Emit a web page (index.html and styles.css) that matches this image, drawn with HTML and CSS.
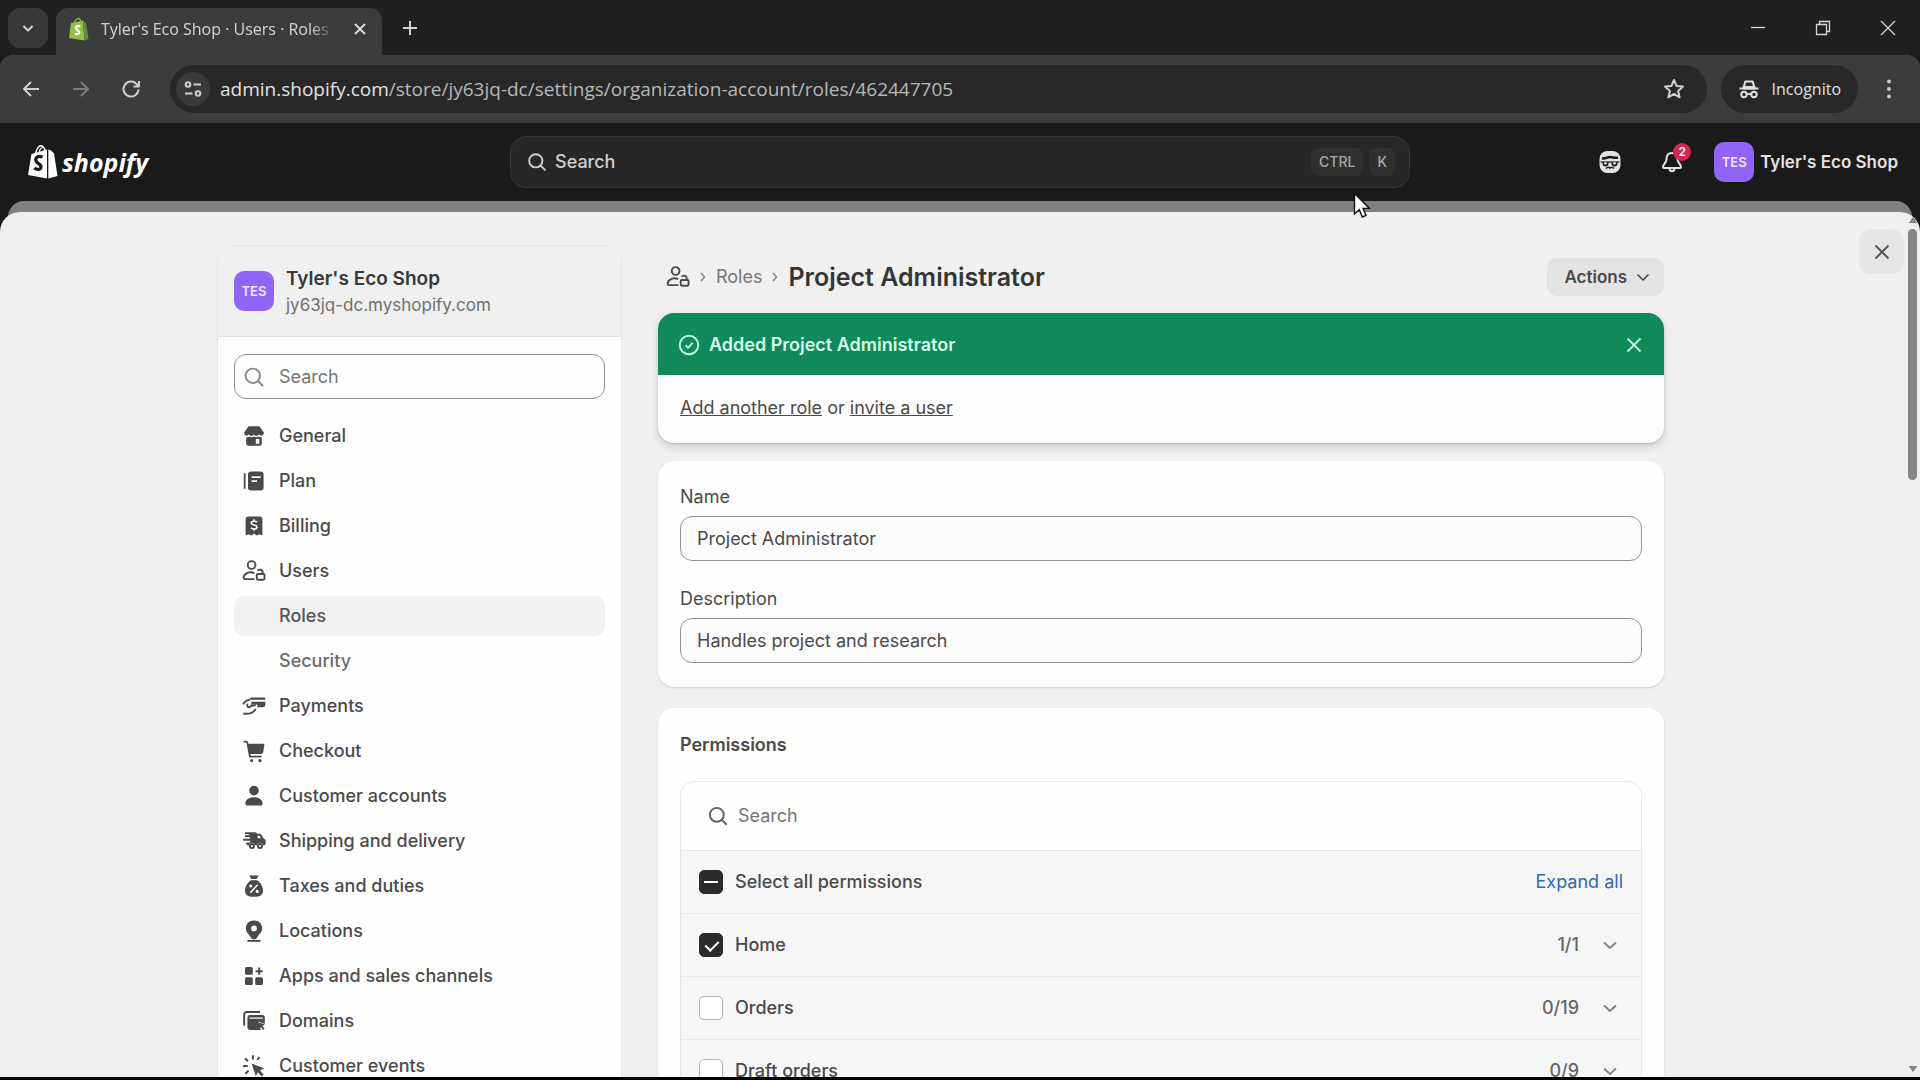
FILE: index.html
```html
<!DOCTYPE html>
<html lang="en">
<head>
    <meta charset="UTF-8">
    <meta name="viewport" content="width=device-width, initial-scale=1.0">
    <title>Tyler's Eco Shop · Users · Roles · Shopify</title>
    <link rel="stylesheet" href="styles.css">
</head>
<body>
    <!-- Browser tabs -->
    <div class="tab-strip">
        <button class="tab-search" aria-label="Search tabs">
            <svg width="20" height="20" viewBox="0 0 20 20" class="line"><path d="M5.500 8l4.500 4.500L14.500 8"/></svg>
        </button>
        <div class="tab">
            <svg width="22" height="24" viewBox="0 0 22 24">
                <path d="M3 6l12-2.500 1.500 20L1 21z" fill="#95bf47"/>
                <path d="M15 3.500l3 2.500 2.500 16-4 1.500z" fill="#5e8e3e"/>
                <path d="M6 6.500C7 2 10.500.5 12 2.500c.7 1 .8 2 .8 3" fill="none" stroke="#7fae3f" stroke-width="1.400"/>
                <path d="M12.300 9.500c-2-1.200-4.300-.4-4.300 1.500 0 2.500 3.600 2.300 3.400 4.700-.2 1.800-2.500 2-4.200.6" fill="none" stroke="#fff" stroke-width="2.200"/>
            </svg>
            <span class="tab-title">Tyler's Eco Shop · Users · Roles</span>
            <button class="icon-button" aria-label="Close tab">
                <svg width="20" height="20" viewBox="0 0 20 20" class="line"><path d="M5 5l10 10M15 5L5 15"/></svg>
            </button>
        </div>
        <button class="icon-button new-tab" aria-label="New tab">
            <svg width="20" height="20" viewBox="0 0 20 20" class="line"><path d="M10 3v14M3 10h14"/></svg>
        </button>
        <div class="window-buttons">
            <button class="icon-button" aria-label="Minimize">
                <svg width="20" height="20" viewBox="0 0 20 20" class="thin"><path d="M3 9.500h14"/></svg>
            </button>
            <button class="icon-button" aria-label="Restore">
                <svg width="20" height="20" viewBox="0 0 20 20" class="thin"><path d="M3.500 6.500h10v10h-10zM6.500 6V3.500h10v10H14"/></svg>
            </button>
            <button class="icon-button" aria-label="Close window">
                <svg width="20" height="20" viewBox="0 0 20 20" class="thin"><path d="M3 3l14 14M17 3L3 17"/></svg>
            </button>
        </div>
    </div>

    <!-- Address bar -->
    <div class="toolbar">
        <button class="icon-button" aria-label="Back">
            <svg width="22" height="22" viewBox="0 0 22 22" class="line"><path d="M19 11H4M11 4l-7 7 7 7"/></svg>
        </button>
        <button class="icon-button" aria-label="Forward" disabled>
            <svg width="22" height="22" viewBox="0 0 22 22" class="line"><path d="M3 11h15M11 4l7 7-7 7"/></svg>
        </button>
        <button class="icon-button" aria-label="Reload">
            <svg width="22" height="22" viewBox="0 0 22 22" class="line"><path d="M18.500 11.500a7.500 7.500 0 1 1-2.200-5.800L18.500 8M19 3v5.500h-5.500"/></svg>
        </button>
        <div class="omnibox">
            <button class="site-info" aria-label="Site information">
                <svg width="20" height="20" viewBox="0 0 20 20" class="line"><circle cx="5" cy="5.500" r="2.300"/><path d="M10.500 5.500H18M2 14.500h7.500"/><circle cx="15" cy="14.500" r="2.300"/></svg>
            </button>
            <span class="url"><span class="url-host">admin.shopify.com</span>/store/jy63jq-dc/settings/organization-account/roles/462447705</span>
            <button class="icon-button" aria-label="Bookmark this tab">
                <svg width="22" height="22" viewBox="0 0 22 22" class="line"><path d="M11 2l2.600 6 6.400.6-4.900 4.300 1.500 6.400L11 15.900l-5.600 3.400 1.500-6.400L2 8.600 8.400 8z"/></svg>
            </button>
        </div>
        <div class="incognito">
            <svg width="22" height="22" viewBox="0 0 22 22" class="line"><path d="M1.500 10.500h19"/><path d="M5.500 10L7.300 3.500h7.400L16.500 10"/><path d="M5.500 9h11v1.500h-11z" fill="currentColor"/><circle cx="6" cy="16.500" r="2.700"/><circle cx="16" cy="16.500" r="2.700"/><path d="M8.700 16h4.600"/></svg>
            <span>Incognito</span>
        </div>
        <button class="icon-button menu-dots" aria-label="Menu">
            <svg width="22" height="22" viewBox="0 0 22 22" fill="currentColor"><circle cx="11" cy="3.500" r="1.900"/><circle cx="11" cy="11" r="1.900"/><circle cx="11" cy="18.500" r="1.900"/></svg>
        </button>
    </div>

    <!-- Shopify top bar -->
    <header class="topbar">
        <a href="#" class="logo" aria-label="Shopify home">
            <svg width="30" height="36" viewBox="0 0 30 36">
                <path d="M3.500 10L19 5.500v29L0 31z" fill="#fff"/>
                <path d="M20.300 5.500l2.500.8L26 9.500 29.500 32l-9.200 2.500z" fill="#fff"/>
                <path d="M7.500 9.500C9 3 12 1.200 14 2c2.500 1 2.800 4 2.800 5.500" fill="none" stroke="#fff" stroke-width="1.500"/>
                <path d="M11 8.500c.5-3 2.500-5 4.500-5.500" fill="none" stroke="#fff" stroke-width="1.200"/>
                <path d="M14.500 13.200c-3-1.600-6.700-.6-6.700 2.600 0 3.900 5.400 3.600 5.200 7.200-.2 2.900-4 3.200-6.700 1" fill="none" stroke="#1a1a1a" stroke-width="3.200"/>
            </svg>
            <span>shopify</span>
        </a>
        <button class="global-search">
            <svg width="24" height="24" viewBox="0 0 20 20" class="line"><circle cx="9" cy="9" r="5.500"/><path d="M13 13l4 4"/></svg>
            <span class="global-search-text">Search</span>
            <kbd>CTRL</kbd>
            <kbd>K</kbd>
        </button>
        <div class="topbar-right">
            <button class="icon-button" aria-label="Sidekick">
                <svg width="24" height="24" viewBox="0 0 24 24">
                    <rect x="1.500" y="1" width="21" height="22" rx="8" fill="#e3e3e3"/>
                    <path d="M4 8.200c3.500.8 5-1.200 8-1.200s4 1.500 8 .5" fill="none" stroke="#1a1a1a" stroke-width="2.600"/>
                    <path d="M2.500 12h19" fill="none" stroke="#1a1a1a" stroke-width="1.200"/>
                    <path d="M4.500 12h6v1.500a3 3 0 0 1-6 0zM13.500 12h6v1.500a3 3 0 0 1-6 0z" fill="#1a1a1a"/>
                    <circle cx="7.500" cy="13.300" r="1.400" fill="#e3e3e3"/><circle cx="16.500" cy="13.300" r="1.400" fill="#e3e3e3"/>
                    <path d="M8 18.500c1.500-1.500 3-1.500 4-.5 1-1 2.500-1 4 .5" fill="none" stroke="#1a1a1a" stroke-width="1.600"/>
                </svg>
            </button>
            <button class="icon-button bell" aria-label="2 notifications">
                <svg width="24" height="24" viewBox="0 0 24 24" class="line"><path d="M12 3c-3.500 0-5.500 2.500-5.500 6 0 4-3.500 5.500-3.500 8 0 .6.500 1 1 1h16c.5 0 1-.4 1-1 0-2.500-3.500-4-3.500-8 0-3.500-2-6-5.500-6zM9.500 18.500c0 3.500 5 3.500 5 0"/></svg>
                <span class="badge">2</span>
            </button>
            <button class="store-menu">
                <span class="avatar">TES</span>
                <span>Tyler's Eco Shop</span>
            </button>
        </div>
        <svg class="cursor" width="20" height="28" viewBox="0 0 20 28"><path d="M1.500 1.500v20.500l4.800-4.300 3 7.300 3.700-1.600-3-7h6.500z" fill="#fff" stroke="#111" stroke-width="1.400"/></svg>
    </header>

    <div class="backdrop">
        <div class="backdrop-edge"></div>
        <div class="sheet">
            <div class="settings">
                <aside class="sidebar">
                    <div class="store">
                        <span class="avatar">TES</span>
                        <div>
                            <div class="store-name">Tyler's Eco Shop</div>
                            <div class="store-url">jy63jq-dc.myshopify.com</div>
                        </div>
                    </div>
                    <label class="side-search">
                        <svg width="24" height="24" viewBox="0 0 20 20" class="line"><circle cx="9" cy="9" r="6"/><path d="M13.500 13.500l4 4"/></svg>
                        <input type="search" placeholder="Search" aria-label="Search settings">
                    </label>
                    <nav class="nav">
                        <a href="#"><svg viewBox="0 0 20 20"><path d="M5.500 1.800h9L18.200 7c.3 2.600-2.400 3.600-4.100 1.800-1.200 1.500-3 1.500-4.100 0-1.100 1.500-2.900 1.500-4.100 0C4.200 10.600 1.500 9.600 1.800 7z"/><path fill-rule="evenodd" d="M3.500 11c1 .2 2 0 2.700-.5 1.300.8 2.600.7 3.800-.1 1.200.8 2.500.9 3.800.1.700.500 1.700.7 2.700.5v5.500a1.700 1.700 0 0 1-1.700 1.700H5.200a1.700 1.700 0 0 1-1.700-1.700zm8 1.500v4h3v-4z"/></svg>General</a>
                        <a href="#"><svg viewBox="0 0 20 20"><path d="M1.500 3.500h1.500v13H1.500z"/><path fill-rule="evenodd" d="M7.500 2h8A2.500 2.500 0 0 1 18 4.500v11a2.500 2.500 0 0 1-2.500 2.500h-8A2.500 2.500 0 0 1 5 15.500v-11A2.500 2.500 0 0 1 7.500 2zm.5 4v1.500h7.500V6zm0 3.300v1.500h4.500V9.300z"/></svg>Plan</a>
                        <a href="#"><svg viewBox="0 0 20 20"><path d="M5.500 2h9A2.500 2.500 0 0 1 17 4.500V18l-2.400-1.200L12.300 18 10 16.500 7.700 18l-2.300-1.200L3 18V4.500A2.500 2.500 0 0 1 5.500 2z"/><path class="cut" d="M12.500 6.800C11.500 5.800 7.700 5.600 7.700 7.600c0 2.100 4.800 1.200 4.800 3.300 0 2-3.900 1.900-5 .6M10 4.300v1.500M10 12.500V14"/></svg>Billing</a>
                        <a href="#"><svg viewBox="0 0 20 20" class="line"><circle cx="8" cy="5" r="3.200"/><path d="M10.300 16.800H2.200c-1.300 0-1.300-2.800 1-4.400 2-1.300 5-1.500 7-.6"/><rect x="12.300" y="12.500" width="6.500" height="4.800" rx="1"/><path d="M13 9.800c1-1.500 4.200-1.200 4.200 1.200v1.500"/></svg>Users</a>
                        <a href="#" class="sub active">Roles</a>
                        <a href="#" class="sub">Security</a>
                        <a href="#"><svg viewBox="0 0 20 20"><path d="M8 3h10.500a1 1 0 0 1 1 1v.8H6.500C6.500 3.700 7 3 8 3zM8 6.500h11.500V9a2 2 0 0 1-2 2h-5c1-1.500.2-2.500-1.200-2.300L7.500 9z"/><path class="stroke" d="M1 8.500c1.500-2.500 3-3.500 5.500-3.700M6 11c1.500-1.200 3.800-1.700 5.500-1.500M1 16.200c5.500.8 8-.2 10.500-3.700M4.500 8c-.5 2.500.5 3.300 2 3"/></svg>Payments</a>
                        <a href="#"><svg viewBox="0 0 20 20"><path d="M1.300 1.500h2.200c.8 0 1.400.5 1.600 1.200L5.300 4h12.400c.6 0 1 .5.900 1l-.9 5.800a2 2 0 0 1-2 1.700H7l.3 1.500h9v1.500H6L3.700 3H1.300z"/><circle cx="8" cy="18" r="1.300"/><circle cx="15" cy="18" r="1.300"/></svg>Checkout</a>
                        <a href="#"><svg viewBox="0 0 20 20"><circle cx="10" cy="5.500" r="4"/><path d="M2.800 16.500c0-3.500 3-5.500 7.200-5.500s7.200 2 7.200 5.500c0 .9-.6 1.500-1.500 1.500H4.300c-.9 0-1.500-.6-1.500-1.500z"/></svg>Customer accounts</a>
                        <a href="#"><svg viewBox="0 0 20 20"><path fill-rule="evenodd" d="M2.500 2.800H11a2 2 0 0 1 1.700 1.200h1.600c1 0 1.700.5 2.200 1.300l1.300 2.500c1.200.4 1.900 1.200 1.900 2.500v1.500c0 1-.7 1.700-1.700 1.700h-.4a2.700 2.700 0 0 0-5.200 0h-1.600a2.700 2.700 0 0 0-5.200 0H5c-1 0-1.500-.5-1.500-1.500v-.8h3.300V9.700H1V8.200h5.500V6.700h-4V5.200H6V4.300H2.500zM13 5.500v2.300h2.800l-1-2z"/><circle cx="8.200" cy="14.200" r="1.700" class="stroke"/><circle cx="15" cy="14.200" r="1.700" class="stroke"/></svg>Shipping and delivery</a>
                        <a href="#"><svg viewBox="0 0 20 20"><path d="M6 1.200h8l-1.800 3H7.800zM7.500 5.200h5c3 1.800 5 5.500 5 8.500 0 3.500-2 5.300-7.500 5.300s-7.500-1.800-7.500-5.300c0-3 2-6.700 5-8.500z"/><path class="cut" d="M13 9l-6 6.500"/><circle class="cut" cx="7.300" cy="10" r=".7"/><circle class="cut" cx="12.700" cy="14.500" r=".7"/></svg>Taxes and duties</a>
                        <a href="#"><svg viewBox="0 0 20 20"><path fill-rule="evenodd" d="M10 1.200c4 0 6.800 2.700 6.800 6.500 0 3.600-3.300 5.500-4.300 7.900-.5 1.100-1.200 1.400-2.500 1.400s-2-.3-2.500-1.400c-1-2.400-4.300-4.300-4.300-7.900C3.200 3.900 6 1.200 10 1.200zM10 5.500a2.400 2.400 0 1 0 0 4.800 2.400 2.400 0 0 0 0-4.800z"/><path d="M4.500 17.500h11V19h-11z"/></svg>Locations</a>
                        <a href="#"><svg viewBox="0 0 20 20"><rect x="2.500" y="2.500" width="6.500" height="6.500" rx="1.300"/><rect x="2.500" y="11" width="6.500" height="6.500" rx="1.300"/><rect x="11" y="11" width="6.500" height="6.500" rx="1.300"/><path class="stroke" d="M14.300 3v6M11.300 6h6"/></svg>Apps and sales channels</a>
                        <a href="#"><svg viewBox="0 0 20 20"><path class="stroke" d="M1.800 14V4.500a2 2 0 0 1 2-2H15"/><path fill-rule="evenodd" d="M6.500 5h10A2.300 2.300 0 0 1 19 7.300v5.200l-5.500-2 2.200 7H6.500A2.300 2.300 0 0 1 4.500 15V7.300A2.300 2.300 0 0 1 6.500 5zM6.300 7v1.200h11V7z"/><path d="M13.500 11l5.500 2-1.800 1.200 1.500 2.300-1.200 1-1.600-2.300-1.200 1.300z"/></svg>Domains</a>
                        <a href="#"><svg viewBox="0 0 20 20"><path d="M8 8l10.500 3.800-3.500 2 3 3.300-1.700 1.600-3-3.400-1.800 3.200z"/><path class="stroke" d="M9 1v3.500M14.500 2.500L12.800 5M2.500 3.500L5 6M1 10h3.800M2.800 16.500L5.500 14"/></svg>Customer events</a>
                    </nav>
                </aside>

                <main class="main">
                    <div class="page-header">
                        <svg width="24" height="24" viewBox="0 0 20 20" class="line"><circle cx="8" cy="5" r="3.200"/><path d="M10.300 16.800H2.200c-1.300 0-1.300-2.800 1-4.400 2-1.300 5-1.500 7-.6"/><rect x="12.300" y="12.500" width="6.500" height="4.800" rx="1"/><path d="M13 9.800c1-1.500 4.200-1.200 4.200 1.200v1.500"/></svg>
                        <svg width="8" height="12" viewBox="0 0 8 12" class="line crumb"><path d="M2 2l3.500 4L2 10"/></svg>
                        <a href="#">Roles</a>
                        <svg width="8" height="12" viewBox="0 0 8 12" class="line crumb"><path d="M2 2l3.500 4L2 10"/></svg>
                        <h1>Project Administrator</h1>
                        <button class="actions">Actions
                            <svg width="20" height="20" viewBox="0 0 20 20" class="line"><path d="M4.500 7.500L10 13l5.500-5.500"/></svg>
                        </button>
                    </div>

                    <section class="card banner">
                        <div class="banner-title">
                            <svg width="24" height="24" viewBox="0 0 24 24" class="line"><circle cx="12" cy="12" r="9.300"/><path d="M8.500 12.200l2.600 2.600 4.500-5"/></svg>
                            <h2>Added Project Administrator</h2>
                            <button class="icon-button" aria-label="Dismiss">
                                <svg width="20" height="20" viewBox="0 0 20 20" class="line"><path d="M3.500 3.500l13 13M16.500 3.500l-13 13"/></svg>
                            </button>
                        </div>
                        <p><a href="#">Add another role</a> or <a href="#">invite a user</a></p>
                    </section>

                    <section class="card fields">
                        <div class="field">
                            <label for="role-name">Name</label>
                            <input type="text" id="role-name" value="Project Administrator">
                        </div>
                        <div class="field">
                            <label for="role-description">Description</label>
                            <input type="text" id="role-description" value="Handles project and research">
                        </div>
                    </section>

                    <section class="card permissions">
                        <h2>Permissions</h2>
                        <div class="permission-box">
                            <label class="permission-search">
                                <svg width="24" height="24" viewBox="0 0 20 20" class="line"><circle cx="9" cy="9" r="5.800"/><path d="M13.300 13.300l4 4"/></svg>
                                <input type="search" placeholder="Search" aria-label="Search permissions">
                            </label>
                            <div class="permission-row">
                                <label><input type="checkbox" id="select-all">Select all permissions</label>
                                <button class="expand">Expand all</button>
                            </div>
                            <div class="permission-row">
                                <label><input type="checkbox" checked>Home</label>
                                <span class="count">1/1</span>
                                <button class="icon-button" aria-label="Expand Home"><svg width="20" height="20" viewBox="0 0 20 20" class="line"><path d="M4 7.500l6 5.500 6-5.500"/></svg></button>
                            </div>
                            <div class="permission-row">
                                <label><input type="checkbox">Orders</label>
                                <span class="count">0/19</span>
                                <button class="icon-button" aria-label="Expand Orders"><svg width="20" height="20" viewBox="0 0 20 20" class="line"><path d="M4 7.500l6 5.500 6-5.500"/></svg></button>
                            </div>
                            <div class="permission-row">
                                <label><input type="checkbox">Draft orders</label>
                                <span class="count">0/9</span>
                                <button class="icon-button" aria-label="Expand Draft orders"><svg width="20" height="20" viewBox="0 0 20 20" class="line"><path d="M4 7.500l6 5.500 6-5.500"/></svg></button>
                            </div>
                        </div>
                    </section>
                </main>
            </div>
            <button class="close-settings" aria-label="Close settings">
                <svg width="20" height="20" viewBox="0 0 20 20" class="line"><path d="M3.500 3.500l13 13M16.500 3.500l-13 13"/></svg>
            </button>
            <div class="scrollbar">
                <svg width="10" height="8" viewBox="0 0 10 8"><path d="M5 1l4.500 6h-9z"/></svg>
                <div class="scroll-track"><div class="scroll-thumb"></div></div>
                <svg width="10" height="8" viewBox="0 0 10 8"><path d="M5 7L.5 1h9z"/></svg>
            </div>
        </div>
    </div>

    <script>
        document.getElementById('select-all').indeterminate = true;
    </script>
</body>
</html>
```

FILE: styles.css
```css
* {
    box-sizing: border-box;
}

body {
    margin: 0;
    height: 100vh;
    display: flex;
    flex-direction: column;
    overflow: hidden;
    font-family: Inter, "Liberation Sans", sans-serif;
    font-size: 18px;
    line-height: 24px;
    color: #4a4a4a;
    background-color: #1a1a1a;
    border-bottom: 3px solid #000;
}

h1, h2, p {
    margin: 0;
}

a {
    color: inherit;
}

button, input {
    font: inherit;
    color: inherit;
}

button {
    padding: 0;
    border: none;
    background: none;
    cursor: pointer;
}

svg {
    display: block;
    flex: none;
}

.line, .thin, .stroke {
    fill: none;
    stroke: currentColor;
    stroke-width: 2;
    stroke-linejoin: round;
}

.thin {
    stroke-width: 1.3;
    stroke-linejoin: miter;
}

.icon-button {
    display: flex;
    align-items: center;
    justify-content: center;
}

/* Browser */
.tab-strip {
    display: flex;
    align-items: center;
    height: 56px;
    padding-left: 8px;
    background-color: #202020;
    color: #d6d6d6;
    font-family: "Open Sans", sans-serif;
    font-size: 16px;
}

.tab-search {
    display: flex;
    align-items: center;
    justify-content: center;
    width: 40px;
    height: 40px;
    border-radius: 12px;
    background-color: #383838;
}

.tab {
    display: flex;
    align-items: center;
    align-self: flex-end;
    width: 326px;
    height: 48px;
    margin-left: 8px;
    padding: 0 12px 6px;
    border-radius: 12px 12px 0 0;
    background-color: #3c3c3c;
}

.tab-title {
    flex: 1;
    margin: 0 16px 0 11px;
    white-space: nowrap;
    mask-image: linear-gradient(to right, #000 90%, transparent);
}

.new-tab {
    margin-left: 18px;
}

.window-buttons {
    display: flex;
    gap: 45px;
    margin-left: auto;
    padding-right: 22px;
}

.toolbar {
    display: flex;
    align-items: center;
    height: 67px;
    padding: 0 20px 2px;
    background-color: #3c3c3c;
    border-radius: 10px 10px 0 0;
    color: #d0d0d0;
    box-shadow: 0 -10px 0 -9px #3c3c3c;
}

.toolbar > .icon-button {
    margin-right: 28px;
}

.toolbar > .menu-dots {
    margin: 0 0 0 20px;
}

.icon-button:disabled {
    color: #7c7c7c;
}

.omnibox {
    flex: 1;
    display: flex;
    align-items: center;
    height: 48px;
    padding: 0 22px 0 6px;
    border-radius: 24px;
    background-color: #282828;
}

.site-info {
    display: flex;
    align-items: center;
    justify-content: center;
    width: 34px;
    height: 34px;
    border-radius: 50%;
    background-color: #3a3a3a;
}

.url {
    flex: 1;
    margin-left: 10px;
    font-family: "Open Sans", sans-serif;
    font-size: 19px;
    color: #b8b8b8;
}

.url-host {
    color: #e3e3e3;
}

.incognito {
    display: flex;
    align-items: center;
    gap: 12px;
    height: 48px;
    margin-left: 14px;
    padding: 0 17px;
    border-radius: 24px;
    background-color: #282828;
    color: #e0e0e0;
    font-family: "Open Sans", sans-serif;
    font-size: 16px;
}

/* Shopify top bar */
.topbar {
    position: relative;
    display: grid;
    grid-template-columns: 1fr 900px 1fr;
    align-items: center;
    height: 78px;
    padding: 0 22px;
    background-color: #1a1a1a;
    color: #e3e3e3;
}

.logo {
    display: flex;
    align-items: center;
    gap: 4px;
    padding-left: 6px;
    color: #fff;
    text-decoration: none;
    font-family: "Open Sans", sans-serif;
    font-size: 25px;
    font-style: italic;
    font-weight: 700;
}

.global-search {
    display: flex;
    align-items: center;
    gap: 6px;
    height: 52px;
    padding: 0 14px;
    border: 1px solid #363636;
    border-radius: 16px;
    background-color: #272727;
    color: #cfcfcf;
    font-weight: 500;
}

.global-search .line {
    stroke-width: 1.6;
}

.global-search-text {
    flex: 1;
    text-align: left;
}

kbd {
    height: 28px;
    padding: 0 8px;
    border-radius: 8px;
    background-color: #303030;
    color: #a8a8a8;
    font: 500 14px/28px Inter, sans-serif;
}

.topbar-right {
    display: flex;
    align-items: center;
    justify-content: flex-end;
    gap: 30px;
}

.topbar .icon-button {
    width: 32px;
    height: 40px;
}

.bell {
    position: relative;
}

.badge {
    position: absolute;
    top: 1px;
    right: -3px;
    width: 18px;
    height: 18px;
    border-radius: 9px;
    background-color: #d32752;
    color: #fff;
    font-size: 12px;
    font-weight: 600;
    line-height: 18px;
}

.store-menu {
    display: flex;
    align-items: center;
    gap: 6px;
    margin-left: -4px;
    font-size: 17px;
    font-weight: 600;
}

.avatar {
    width: 40px;
    height: 40px;
    border-radius: 10px;
    background-color: #9065f5;
    color: #f0e4ff;
    font-size: 13px;
    font-weight: 600;
    line-height: 40px;
    text-align: center;
}

.cursor {
    position: absolute;
    left: 1353px;
    top: 69px;
    z-index: 2;
}

/* Settings sheet */
.backdrop {
    flex: 1;
    display: flex;
    flex-direction: column;
    min-height: 0;
}

.backdrop-edge {
    height: 32px;
    margin: 0 8px -21px;
    border-radius: 16px 16px 0 0;
    background-color: #808080;
}

.sheet {
    position: relative;
    flex: 1;
    min-height: 0;
    overflow: hidden;
    padding: 33px 39px 0 0;
    border-radius: 20px 20px 0 0;
    background-color: #f0f0f0;
}

.settings {
    display: grid;
    grid-template-columns: 405px minmax(0, 1fr);
    gap: 36px;
    max-width: 1447px;
    margin: 0 auto;
}

.sidebar {
    border: 1px solid #e6e6e6;
    border-radius: 16px;
    background-color: #fefefe;
    overflow: hidden;
}

.store {
    display: flex;
    align-items: center;
    gap: 12px;
    height: 91px;
    padding: 0 16px;
    background-color: #f0f0f0;
    border-bottom: 1px solid #e3e3e3;
}

.store-name {
    font-size: 19px;
    line-height: 28px;
    font-weight: 600;
    color: #383838;
}

.store-url {
    font-size: 17px;
    color: #6f6f6f;
}

.side-search {
    display: flex;
    align-items: center;
    gap: 13px;
    height: 45px;
    margin: 17px 16px;
    padding: 0 7px;
    border: 1px solid #8f8f8f;
    border-radius: 12px;
    color: #8a8a8a;
}

.side-search .line, .page-header .line, .permission-search .line {
    stroke-width: 1.6;
}

.side-search input, .permission-search input {
    flex: 1;
    min-width: 0;
    padding: 0;
    border: none;
    outline: none;
    background: none;
}

::placeholder {
    color: #757575;
    opacity: 1;
}

.nav {
    display: flex;
    flex-direction: column;
    gap: 5px;
    padding: 0 16px;
}

.nav a {
    display: flex;
    align-items: center;
    gap: 13px;
    height: 40px;
    padding-left: 8px;
    border-radius: 10px;
    color: #4a4a4a;
    font-weight: 500;
    text-decoration: none;
}

.nav svg {
    width: 24px;
    height: 24px;
    fill: currentColor;
}

.nav .line {
    fill: none;
    stroke-width: 1.6;
}

.nav .stroke {
    fill: none;
    stroke-width: 1.6;
}

.nav .cut {
    fill: none;
    stroke: #fefefe;
    stroke-width: 1.3;
}

.nav .sub {
    padding-left: 45px;
    color: #6a6a6a;
}

.nav .active {
    background-color: #f1f1f1;
    color: #555;
}

/* Role form */
.page-header {
    display: flex;
    align-items: center;
    gap: 9px;
    height: 38px;
    margin: 13px 0 17px;
    padding-left: 8px;
}

.page-header a {
    color: #777;
    text-decoration: none;
}

.page-header .crumb {
    color: #888;
}

h1 {
    font-size: 25px;
    font-weight: 600;
    color: #353535;
}

.actions {
    display: flex;
    align-items: center;
    gap: 6px;
    height: 38px;
    margin-left: auto;
    padding: 0 11px 0 17px;
    border-radius: 10px;
    background-color: #e3e3e3;
    font-size: 17px;
    font-weight: 600;
}

.card {
    margin-bottom: 21px;
    border-radius: 16px;
    background-color: #fefefe;
    box-shadow: 0 1px 2px rgba(0, 0, 0, 0.15);
}

.banner {
    margin-bottom: 18px;
    overflow: hidden;
    box-shadow: 0 4px 10px rgba(0, 0, 0, 0.14), 0 1px 2px rgba(0, 0, 0, 0.14);
}

.banner-title {
    display: flex;
    align-items: center;
    gap: 8px;
    height: 62px;
    padding: 1px 20px 0 19px;
    background-color: #108a5b;
    color: #b9fbd9;
}

.banner-title h2 {
    flex: 1;
    color: #d5ffea;
}

h2 {
    font-size: 18px;
    font-weight: 600;
}

.banner p {
    padding: 21px 22px 23px;
}

.fields {
    display: flex;
    flex-direction: column;
    gap: 26px;
    padding: 24px 22px;
}

.field label {
    display: block;
    margin-bottom: 7px;
}

.field input {
    display: block;
    width: 100%;
    height: 45px;
    padding: 0 16px;
    border: 1px solid #929292;
    border-radius: 12px;
    background-color: #fcfcfc;
}

.permissions {
    padding: 25px 22px;
}

.permission-box {
    margin-top: 24px;
    border: 1px solid #e8e8e8;
    border-radius: 14px;
    overflow: hidden;
}

.permission-search {
    display: flex;
    align-items: center;
    gap: 8px;
    height: 68px;
    padding: 0 25px;
    color: #606060;
}

.permission-row {
    display: flex;
    align-items: center;
    height: 63px;
    padding: 0 18px;
    border-top: 1px solid #e8e8e8;
    background-color: #f6f6f6;
}

.permission-row label {
    display: flex;
    align-items: center;
    gap: 12px;
    margin-right: auto;
    font-weight: 500;
}

.permission-row input {
    appearance: none;
    position: relative;
    width: 24px;
    height: 24px;
    margin: 0;
    border: 1px solid #b0b0b0;
    border-radius: 5px;
    background-color: #fff;
}

.permission-row input:checked, .permission-row input:indeterminate {
    border-color: #2b2b2b;
    background-color: #2b2b2b;
}

.permission-row input:indeterminate::after {
    content: "";
    position: absolute;
    left: 4px;
    top: 10px;
    width: 14px;
    height: 2px;
    background-color: #fff;
}

.permission-row input:checked::after {
    content: "";
    position: absolute;
    left: 8px;
    top: 4px;
    width: 6px;
    height: 11px;
    border: solid #fff;
    border-width: 0 2px 2px 0;
    transform: rotate(45deg);
}

.permission-row .icon-button {
    width: 26px;
    margin-left: 18px;
    color: #858585;
}

.count {
    color: #666;
    font-weight: 500;
}

.expand {
    color: #2f68b8;
}

.close-settings {
    position: absolute;
    top: 17px;
    right: 16px;
    display: flex;
    align-items: center;
    justify-content: center;
    width: 45px;
    height: 45px;
    border-radius: 12px;
    background-color: #e6e6e6;
    color: #555;
}

.scrollbar {
    position: absolute;
    top: 4px;
    right: 2px;
    bottom: 4px;
    display: flex;
    flex-direction: column;
    align-items: center;
    width: 11px;
    fill: #858585;
}

.scroll-track {
    flex: 1;
    padding-top: 5px;
}

.scroll-thumb {
    width: 9px;
    height: 30%;
    border-radius: 5px;
    background-color: #858585;
}
```
